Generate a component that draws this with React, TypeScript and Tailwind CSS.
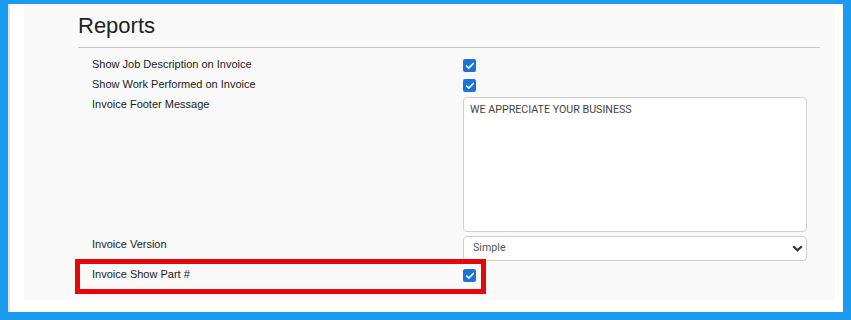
import { Check } from "lucide-react";

function Box() {
  return (
    <span className="mt-[3px] flex h-[13px] w-[13px] items-center justify-center rounded-[2px] bg-[#1a73d9]">
      <Check className="h-[10px] w-[10px] text-white" strokeWidth={4} />
    </span>
  );
}

function Row({ label, children, className = "" }: { label: string; children: React.ReactNode; className?: string }) {
  return (
    <div className={"flex items-start " + className}>
      <div className="w-[371px] shrink-0 text-[11px] leading-4 text-[#1a1a1a]">{label}</div>
      {children}
    </div>
  );
}

export default function App() {
  return (
    <div className="h-[320px] w-[851px] bg-[#1b9bf0] pt-1 pr-2 pb-2 pl-2 font-['Liberation_Sans',Arial,sans-serif]">
      <div className="flex h-full border-l-2 border-[#e4e4e4] bg-white pr-2 pb-3 pl-[14px]">
        <div className="relative flex-1 bg-[#f9f9f9] pt-[9px] pl-[54px]">
          <h1 className="text-[22px] leading-[26px] text-[#222]">Reports</h1>
          <div className="mt-[8px] h-px w-[742px] bg-[#c8c8c8]" />
          <div className="mt-[8px] flex flex-col pl-[14px]">
            <Row label="Show Job Description on Invoice" className="h-5">
              <Box />
            </Row>
            <Row label="Show Work Performed on Invoice" className="h-5">
              <Box />
            </Row>
            <Row label="Invoice Footer Message" className="mb-1">
              <div className="mt-px h-[135px] w-[344px] rounded-[4px] border border-[#cfcfcf] bg-white px-[6px] pt-[4px] font-['Roboto',sans-serif] text-[10.7px] leading-4 text-[#444]">
                WE APPRECIATE YOUR BUSINESS
              </div>
            </Row>
            <Row label="Invoice Version" className="mb-[5px]">
              <div className="flex h-[25px] w-[344px] items-center justify-between rounded-[4px] border border-[#cfcfcf] bg-white pr-[3px] pl-[9px] font-['Roboto',sans-serif] text-[10.7px] text-[#555]">
                <span>Simple</span>
                <svg width="11" height="7" viewBox="0 0 11 7">
                  <path d="M1.2 1.2 L5.5 5.3 L9.8 1.2" fill="none" stroke="#333" strokeWidth="2.2" />
                </svg>
              </div>
            </Row>
            <Row label="Invoice Show Part #" className="h-5">
              <Box />
            </Row>
          </div>
          <div className="absolute top-[255px] left-[51px] h-[35px] w-[411px] border-[5px] border-[#e40808]" />
        </div>
      </div>
    </div>
  );
}
